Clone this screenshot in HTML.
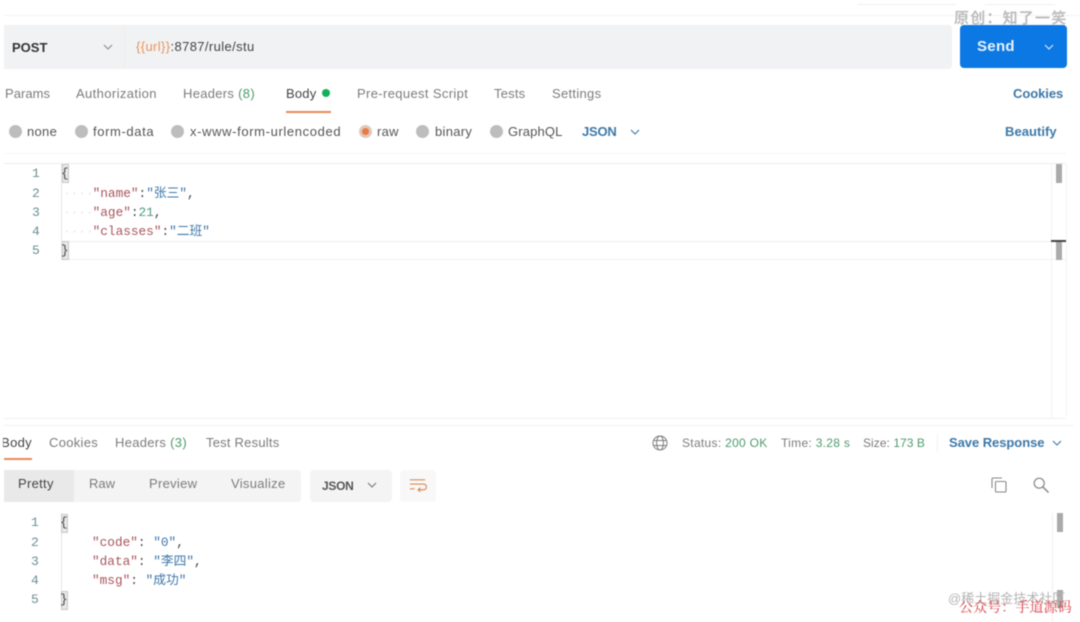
<!DOCTYPE html>
<html><head><meta charset="utf-8">
<style>
html,body{margin:0;padding:0;background:#fff}
#p{position:relative;width:1080px;height:622px;overflow:hidden;background:#fff;font-family:"Liberation Sans","Noto Sans CJK SC",sans-serif;font-size:13px;color:#7c7c7c;filter:blur(.5px)}
#p div,#p span.a{position:absolute}
.t{position:absolute;white-space:nowrap;line-height:16px;letter-spacing:.3px;margin-top:1px}
.m{position:absolute;white-space:nowrap;line-height:18px;font-family:"Liberation Mono","Noto Sans CJK SC",monospace;font-size:12.75px;color:#444;margin-top:1px}
.n{position:absolute;white-space:nowrap;line-height:18px;font-family:"Liberation Mono",monospace;font-size:13px;color:#6a8f92;margin-top:1px}
.k{color:#a8555a}.s{color:#3f77a8}.g{color:#4f9a7c}
.r{position:absolute;width:13px;height:13px;border-radius:50%;background:#bdbdbd}
svg{position:absolute;overflow:visible}
.b{position:absolute;width:7px;height:19px;border:1px solid #c8c8c8;background:#e8e8e8;box-sizing:border-box}
.sb{position:absolute;width:6px;background:#aaa}
</style></head><body><div id="p">
<div style="left:4px;top:15px;width:1076px;height:1px;background:#f3f3f3"></div>
<div style="left:858px;top:4px;width:98px;height:1px;background:#f0f0f0"></div>
<div style="left:985px;top:4px;width:70px;height:1px;background:#f0f0f0"></div>
<!-- URL bar -->
<div style="left:4px;top:25px;width:948px;height:44px;background:#f1f2f3;border-radius:0 4px 4px 0"></div>
<div style="left:124px;top:25px;width:1px;height:44px;background:#ededed"></div>
<span class="t" style="left:12px;top:39px;font-weight:bold;color:#333;letter-spacing:0">POST</span>
<svg style="left:103px;top:44px" width="10" height="6" viewBox="0 0 10 6"><path d="M1 1l4 4 4-4" fill="none" stroke="#8a8a8a" stroke-width="1.1"/></svg>
<span class="t" style="left:136px;top:38px;color:#444;letter-spacing:.38px"><span style="color:#e8945f">{{url}}</span>:8787/rule/stu</span>
<span class="t" style="left:954px;top:9px;font-size:15px;line-height:18px;color:#bdbdbd;letter-spacing:1.2px;font-weight:bold">原创：知了一笑</span>
<!-- Send -->
<div style="left:960px;top:25px;width:107px;height:43px;background:#0b78e3;border-radius:4px"></div>
<span class="t" style="left:977px;top:37px;font-size:15px;line-height:18px;font-weight:bold;color:#e8f3fd">Send</span>
<svg style="left:1044px;top:44px" width="10" height="6" viewBox="0 0 10 6"><path d="M1 1l4 4 4-4" fill="none" stroke="#cfe5fa" stroke-width="1.2"/></svg>
<!-- tabs -->
<span class="t" style="left:5px;top:85px;letter-spacing:.05px">Params</span>
<span class="t" style="left:76px;top:85px;letter-spacing:.38px">Authorization</span>
<span class="t" style="left:183px;top:85px">Headers <span style="color:#4f9a6c">(8)</span></span>
<span class="t" style="left:286px;top:85px;color:#444;letter-spacing:.2px">Body</span>
<div style="left:322px;top:89px;width:8px;height:8px;border-radius:50%;background:#12b05a"></div>
<div style="left:286px;top:111px;width:45px;height:2px;background:#e8895a"></div>
<span class="t" style="left:357px;top:85px;letter-spacing:.36px">Pre-request Script</span>
<span class="t" style="left:494px;top:85px;letter-spacing:.2px">Tests</span>
<span class="t" style="left:552px;top:85px">Settings</span>
<span class="t" style="left:1013px;top:85px;font-weight:bold;color:#3c78a8;letter-spacing:-.05px">Cookies</span>
<!-- radio row -->
<div class="r" style="left:9px;top:125px"></div><span class="t" style="left:27px;top:123px;color:#555">none</span>
<div class="r" style="left:75px;top:125px"></div><span class="t" style="left:93px;top:123px;color:#555;letter-spacing:.62px">form-data</span>
<div class="r" style="left:171px;top:125px"></div><span class="t" style="left:190px;top:123px;color:#555;letter-spacing:.63px">x-www-form-urlencoded</span>
<div class="r" style="left:359px;top:125px;background:#e0c8bc"></div><div style="left:362px;top:128px;width:7px;height:7px;border-radius:50%;background:#e87a42"></div><span class="t" style="left:377px;top:123px;color:#555">raw</span>
<div class="r" style="left:416px;top:125px"></div><span class="t" style="left:435px;top:123px;color:#555">binary</span>
<div class="r" style="left:490px;top:125px"></div><span class="t" style="left:508px;top:123px;color:#555;letter-spacing:.15px">GraphQL</span>
<span class="t" style="left:582px;top:123px;font-weight:bold;color:#3c78a8;letter-spacing:-.2px">JSON</span>
<svg style="left:630px;top:129px" width="10" height="6" viewBox="0 0 10 6"><path d="M1 1l4 4 4-4" fill="none" stroke="#3c78a8" stroke-width="1.1"/></svg>
<span class="t" style="left:1005px;top:123px;font-weight:bold;color:#3c78a8;letter-spacing:.05px">Beautify</span>
<!-- request editor -->
<div style="left:4px;top:153px;width:1062px;height:1px;background:#f5f5f5"></div>
<div style="left:4px;top:163px;width:1062px;height:1px;background:#ececec"></div>
<div style="left:1066px;top:164px;width:1px;height:253px;background:#f3f3f3"></div>
<div style="left:1051px;top:164px;width:1px;height:254px;background:#f1f1f1"></div>
<div style="left:4px;top:418px;width:1062px;height:1px;background:#efefef"></div>
<div style="left:61px;top:164px;width:1px;height:96px;background:#e6e6e6"></div>
<div style="left:62px;top:241px;width:1004px;height:1px;background:#ececec"></div>
<div style="left:62px;top:259px;width:1004px;height:1px;background:#f0f0f0"></div>
<span class="n" style="left:32px;top:164px">1</span>
<span class="n" style="left:32px;top:184px">2</span>
<span class="n" style="left:32px;top:203px">3</span>
<span class="n" style="left:32px;top:222px">4</span>
<span class="n" style="left:32px;top:241px">5</span>
<div class="b" style="left:62px;top:164px"></div><span class="m" style="left:61px;top:164px">{</span>
<span class="m" style="left:63px;top:184px;color:#e8e8e8">····<span class="k" style="margin-left:-1px">"name"</span><span style="color:#444">:</span><span class="s">"张三"</span><span style="color:#444">,</span></span>
<span class="m" style="left:63px;top:203px;color:#e8e8e8">····<span class="k" style="margin-left:-1px">"age"</span><span style="color:#444">:</span><span class="g">21</span><span style="color:#444">,</span></span>
<span class="m" style="left:63px;top:222px;color:#e8e8e8">····<span class="k" style="margin-left:-1px">"classes"</span><span style="color:#444">:</span><span class="s">"二班"</span></span>
<div class="b" style="left:62px;top:241px"></div><span class="m" style="left:61px;top:241px">}</span>
<div class="sb" style="left:1056px;top:164px;height:19px"></div>
<div class="sb" style="left:1056px;top:242px;height:18px"></div>
<div style="left:1051px;top:240px;width:15px;height:2px;background:#444"></div>
<!-- response header -->
<div style="left:4px;top:425px;width:1070px;height:1px;background:#f3f3f3"></div>
<span class="t" style="left:3px;top:434px;color:#444;width:29px;overflow:hidden;direction:rtl">Body</span>
<div style="left:4px;top:458px;width:28px;height:2px;background:#e8895a"></div>
<span class="t" style="left:49px;top:434px">Cookies</span>
<span class="t" style="left:115px;top:434px">Headers <span style="color:#4f9a6c">(3)</span></span>
<span class="t" style="left:206px;top:434px;letter-spacing:.22px">Test Results</span>
<svg style="left:652px;top:435px" width="16" height="16" viewBox="0 0 16 16" fill="none" stroke="#7c7c7c" stroke-width="1"><circle cx="8" cy="8" r="7"/><ellipse cx="8" cy="8" rx="3.4" ry="7"/><path d="M1.5 5.5h13M1.5 10.5h13"/></svg>
<span class="t" style="left:682px;top:434px;font-size:12px;letter-spacing:.3px">Status: <span style="color:#4f9a6c">200 OK</span></span>
<span class="t" style="left:781px;top:434px;font-size:12px;letter-spacing:.3px">Time: <span style="color:#4f9a6c">3.28 s</span></span>
<span class="t" style="left:863px;top:434px;font-size:12px;letter-spacing:.05px">Size: <span style="color:#4f9a6c">173 B</span></span>
<div style="left:937px;top:433px;width:1px;height:19px;background:#f3f3f3"></div>
<span class="t" style="left:949px;top:434px;font-weight:bold;color:#3c78a8;letter-spacing:-.05px">Save Response</span>
<svg style="left:1052px;top:440px" width="10" height="6" viewBox="0 0 10 6"><path d="M1 1l4 4 4-4" fill="none" stroke="#3c78a8" stroke-width="1.1"/></svg>
<!-- response toolbar -->
<div style="left:4px;top:470px;width:297px;height:32px;background:#f4f4f4;border-radius:0 3px 3px 0"></div>
<div style="left:4px;top:470px;width:70px;height:32px;background:#e9e9e9"></div>
<span class="t" style="left:18px;top:475px;color:#444">Pretty</span>
<span class="t" style="left:89px;top:475px;letter-spacing:0">Raw</span>
<span class="t" style="left:149px;top:475px">Preview</span>
<span class="t" style="left:231px;top:475px">Visualize</span>
<div style="left:310px;top:470px;width:82px;height:32px;background:#f4f4f4;border-radius:4px"></div>
<span class="t" style="left:322px;top:477px;font-size:12px;font-weight:bold;color:#555;letter-spacing:-.3px">JSON</span>
<svg style="left:367px;top:482px" width="10" height="6" viewBox="0 0 10 6"><path d="M1 1l4 4 4-4" fill="none" stroke="#777" stroke-width="1.1"/></svg>
<div style="left:400px;top:470px;width:36px;height:32px;background:#f8f8f8;border-radius:4px"></div>
<svg style="left:409px;top:478px" width="17" height="15" viewBox="0 0 18 15" fill="none" stroke="#dc8a5c" stroke-width="1.2"><path d="M1 1.5h16M1 6h14.5a2.6 2.6 0 0 1 0 6H10M12 9.8L9.6 12l2.4 2.2M1 11h5"/></svg>
<svg style="left:991px;top:477px" width="16" height="16" viewBox="0 0 16 16" fill="none" stroke="#888" stroke-width="1.1"><rect x="4.5" y="4.5" width="10.5" height="10.5" rx="1"/><path d="M1 11V2a1 1 0 0 1 1-1h9"/></svg>
<svg style="left:1033px;top:477px" width="16" height="16" viewBox="0 0 16 16" fill="none" stroke="#888" stroke-width="1.2"><circle cx="6.2" cy="6.2" r="5"/><path d="M10 10l5.5 5.5" stroke-width="1.5"/></svg>
<!-- response editor -->
<div style="left:61px;top:513px;width:1px;height:96px;background:#e6e6e6"></div>
<div style="left:1052px;top:513px;width:1px;height:109px;background:#f0f0f0"></div>
<span class="n" style="left:31px;top:513px">1</span>
<span class="n" style="left:31px;top:533px">2</span>
<span class="n" style="left:31px;top:552px">3</span>
<span class="n" style="left:31px;top:571px">4</span>
<span class="n" style="left:31px;top:590px">5</span>
<div class="b" style="left:61px;top:514px"></div><span class="m" style="left:60px;top:513px">{</span>
<span class="m" style="left:92px;top:533px"><span class="k">"code"</span>: <span class="s">"0"</span>,</span>
<span class="m" style="left:92px;top:552px"><span class="k">"data"</span>: <span class="s">"李四"</span>,</span>
<span class="m" style="left:92px;top:571px"><span class="k">"msg"</span>: <span class="s">"成功"</span></span>
<div class="b" style="left:61px;top:591px"></div><span class="m" style="left:60px;top:590px">}</span>
<div class="sb" style="left:1057px;top:513px;height:19px"></div>
<div class="sb" style="left:1057px;top:590px;height:18px"></div>
<!-- watermarks -->
<span class="t" style="left:948px;top:590px;font-size:13px;color:#b4b4b4;letter-spacing:0">@稀土掘金技术社区</span>
<span class="t" style="left:959px;top:599px;font-size:14px;line-height:17px;color:#d9424a;letter-spacing:.1px;font-family:'Liberation Serif','Noto Serif CJK SC',serif">公众号：手道源码</span>
</div></body></html>
